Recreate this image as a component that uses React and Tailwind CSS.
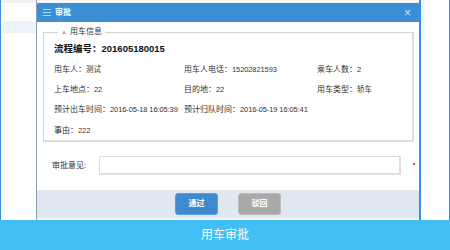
const FONT = "font-['Liberation_Sans','Noto_Sans_CJK_SC',sans-serif]";

const Field = ({ label, value, className = "" }) => (
  <div className={`whitespace-nowrap ${className}`}>
    <span>{label}：</span>
    <span className="text-[7.5px] tracking-[-0.1px]">{value}</span>
  </div>
);

const App = () => {
  return (
    <div className={`w-[450px] h-[250px] bg-white flex flex-col overflow-hidden ${FONT}`}>
      <div className="h-[220px] flex border-l border-r border-[#3a8ee6]">
        {/* page behind the dialog */}
        <div className="w-[35px] flex flex-col">
          <div className="h-[3px] bg-[#f2f2f2]" />
          <div className="h-[18px]" />
          <div className="h-[12px] ml-[2px] bg-[#edf3fa]" />
        </div>

        {/* dialog */}
        <div className="w-[385px] flex flex-col border-l border-[#8d9db0] border-r-2 border-r-[#3a8ee6]">
          <div className="h-[3px] bg-[#f7f7f7]" />
          <div className="h-[19px] bg-[#3b8fd5] flex items-center px-[6px] text-white">
            <div className="flex flex-col gap-[2px] w-[8px] mr-[4px]">
              <span className="h-px bg-[#a9d5f7]" />
              <span className="h-px bg-[#a9d5f7]" />
              <span className="h-px bg-[#a9d5f7]" />
            </div>
            <span className="text-[8px] font-bold">审批</span>
            <span className="ml-auto mr-[2px] text-[#cfe6fa] text-[12px] font-light leading-none">×</span>
          </div>

          <div className="h-[168px] bg-white flex flex-col">
            <fieldset className="mt-[4px] ml-[6px] mr-[5px] h-[116px] border border-[#d2d2d2] border-r-2 border-b-2 border-r-[#dcdce0] border-b-[#dcdce0] px-[10px]">
              <legend className="ml-[4px] px-[3px] text-[8px] text-[#333] flex items-center">
                <span className="text-[6px] text-[#aaa] mr-[3px]">▲</span>
                用车信息
              </legend>
              <div className="text-[9.5px] font-bold text-[#111] mt-[5px] leading-[12px]">
                流程编号：201605180015
              </div>
              <div className="text-[8px] text-[#333] leading-[10px]">
                <div className="grid grid-cols-[130px_129px_1fr] mt-[10px]">
                  <Field label="用车人" value="测试" />
                  <Field label="用车人电话" value="15202821593" />
                  <Field label="乘车人数" value="2" className="pl-[4px]" />
                </div>
                <div className="grid grid-cols-[130px_129px_1fr] mt-[10px]">
                  <Field label="上车地点" value="22" />
                  <Field label="目的地" value="22" />
                  <Field label="用车类型" value="轿车" className="pl-[4px]" />
                </div>
                <div className="grid grid-cols-[130px_1fr] mt-[10px]">
                  <Field label="预计出车时间" value="2016-05-18 16:05:39" />
                  <Field label="预计归队时间" value="2016-05-19 16:05:41" />
                </div>
                <div className="mt-[11px]">
                  <Field label="事由" value="222" />
                </div>
              </div>
            </fieldset>

            <div className="flex items-center mt-[14px] ml-[15px]">
              <span className="text-[8px] text-[#333] w-[47px]">审批意见:</span>
              <div className="w-[302px] h-[19px] border border-[#dedede] border-r-2 border-b-2 bg-white" />
              <span className="ml-[12px] w-[2px] h-[2px] bg-[#f0444a] mb-[4px]" />
            </div>
          </div>

          <div className="h-[28px] bg-[#dfe8f1] flex items-center justify-center gap-[20px]">
            <button className="w-[43px] h-[22px] rounded-[3px] bg-[#3d8ad0] border border-[#5aa0de] text-white text-[8px] font-bold">
              通过
            </button>
            <button className="w-[43px] h-[22px] rounded-[3px] bg-[#a9a9a9] border border-[#bdbdbd] text-white text-[8px] font-bold">
              驳回
            </button>
          </div>
          <div className="h-[2px] bg-[#f4f6f8]" />
        </div>

        <div className="flex-1 flex flex-col">
          <div className="h-[40px] w-[4px] bg-[#f3f5f8]" />
        </div>
      </div>

      <div className="h-[30px] bg-[#42bff5] text-white text-[12px] flex items-center justify-center">
        用车审批
      </div>
    </div>
  );
};

export default App;
